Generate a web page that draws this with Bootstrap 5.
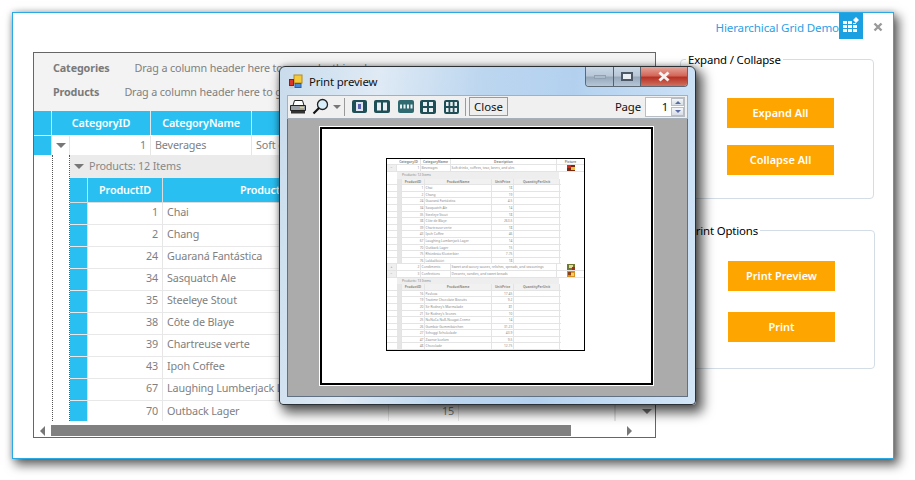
<!DOCTYPE html>
<html lang="en">
<head>
<meta charset="utf-8">
<title>Hierarchical Grid Demo</title>
<link href="https://cdn.jsdelivr.net/npm/bootstrap@5.3.0/dist/css/bootstrap.min.css" rel="stylesheet">
<script src="https://cdn.jsdelivr.net/npm/bootstrap@5.3.0/dist/js/bootstrap.bundle.min.js"></script>
<style>
html,body{margin:0;background:#fff;overflow:hidden}
body{font-family:"Noto Sans","Open Sans",sans-serif;font-size:10.8px;letter-spacing:-.15px;line-height:1.2;color:#7f7f7f}
.desk{position:relative;width:915px;height:480px;overflow:hidden;background:#fff}
.appwin{position:absolute;left:12px;top:12px;width:882px;height:447px;background:#fff;border:1px solid #29a9e6;box-shadow:4px 5px 10px 1px rgba(0,0,0,.6),0 0 6px rgba(0,0,0,.2)}
.apphead{height:26px;justify-content:flex-end}
.apptitle{color:#2d9fe6;font-size:11.6px;margin-top:8px}
.applogo{width:24px;height:26px;background:#1ba1e2}
.appx{width:30px;padding-top:7px;text-align:center;color:#9a9a9a}
.appbody{margin-top:13px;padding-left:20px;gap:24px}
.gridbox{width:623px;height:386px;border:1px solid #666;background:#fff;overflow:hidden}
.grouparea{height:58px;background:#f3f3f3;padding:3px 0 0 19px;white-space:nowrap;overflow:hidden}
.grouparea .gline{height:24px;align-items:center}
.gname{font-weight:700;color:#7a7a7a}
.gn1{margin-right:25px}
.gn2{margin-right:25px}
.hrow{height:25px;background:#29bff1;color:#fff;font-weight:600;border-bottom:1px solid #fff}
.hcell{display:flex;align-items:center;justify-content:center;border-right:1px solid #dfe9ee;flex:none;white-space:nowrap;overflow:hidden}
.drow{height:19px;background:#fff}
.bcell{display:flex;align-items:center;padding:0 4px;border-right:1px solid #e6e6e6;flex:none;white-space:nowrap;overflow:hidden}
.tr{justify-content:flex-end}
.w18{width:18px}.w81{width:81px}.w99{width:99px}.w101{width:101px}.w75{width:75px}.w226{width:226px}.w70{width:70px}.w156{width:156px}.w363{width:363px}
.bluecell{background:#29bff1;border-right:1px solid #ddd;flex:none}
.exp{padding:0;justify-content:center}
.tdown{width:0;height:0;border-left:5px solid transparent;border-right:5px solid transparent;border-top:5px solid #777;flex:none}
.dotcol{width:18px;flex:none;border-left:1px dotted #555;border-right:1px dotted #555;height:266px}
.dtlbody{height:266px;overflow:hidden}
.gbar{height:23px;background:#ebebeb;align-items:center;padding-left:4px;gap:5px;color:#888}
.prow{height:22px;border-bottom:1px solid #e8e8e8;background:#fff}
.prow .bcell{padding-bottom:2px}
.prow:last-child{border-bottom:0}
.phead{height:25px;background:#29bff1;color:#fff;font-weight:600;border-bottom:1px solid #ddd}
.phead .hcell{border-right-color:#ddd}
.vbar{width:40px;flex:none;display:flex;justify-content:center;align-items:flex-end;padding:0 0 7px 22px;border-left:1px solid #e6e6e6}
.sbar{height:15px;margin-top:2px;align-items:center;padding-left:6px}
.tleft{width:0;height:0;border-top:5px solid transparent;border-bottom:5px solid transparent;border-right:5px solid #777}
.tright{width:0;height:0;border-top:5px solid transparent;border-bottom:5px solid transparent;border-left:5px solid #777;margin-left:56px}
.sthumb{width:520px;height:11px;background:#808080;margin-left:6px}
.sidepanel{width:196px}
.fbox{border:1px solid #d3dde6;border-radius:4px;padding:0;width:194px;margin:0}
.fbox legend{float:none;width:auto;font-size:11.4px;line-height:15px;margin:0 0 0 5px;padding:0 2px;color:#000}
.fb1{height:147px}
.fb2{height:146px;margin:24px 0 0 1px}
.orbtn{display:block;width:107px;height:30px;background:orange;color:#fff;font-size:11px;font-weight:600;border:0;border-radius:0;padding:0;margin:0 0 0 46px;letter-spacing:0}
.orbtn:hover{background:orange;color:#fff}
.orb1{margin-top:31px}.orb2{margin-top:17px}.orb3{margin-top:23px}.orb4{margin-top:21px}
.dlg{position:absolute;left:279px;top:66px;width:417px;height:339px;border:1px solid #2c3136;border-radius:6px 6px 4px 4px;background:linear-gradient(97deg,#c9dcec 0,#dfeaf5 22%,#bcd6ef 45%,#b3d1ef 65%,#d3e6f8 100%);box-shadow:5px 6px 12px 2px rgba(0,0,0,.65),0 0 5px rgba(0,0,0,.3);padding:0 7px 7px;overflow:hidden}
.dtitle{height:28px;align-items:flex-start}
.dttext{margin:8px 0 0 6px;color:#111;font-size:11.4px}
.dicon{margin:7px 0 0 2px}
.wbtns{height:20px;margin-left:auto;border:1px solid #5c6874;border-top:0;border-radius:0 0 4px 4px;overflow:hidden}
.wb{height:19px;display:flex;align-items:center;justify-content:center;border-right:1px solid #56616d;background:linear-gradient(#c9d7e6,#b9c8d8 45%,#97a9bb 55%,#b5c6d8)}
.wmin{width:28px}.wmax{width:27px}
.wcl{width:46px;border:0;background:linear-gradient(#e5a59a,#d3685a 45%,#b73326 55%,#d0705f)}
.wminbar{width:12px;height:4px;background:#a9bbcc;border:1px solid #8fa0b2}
.wmaxbox{width:12px;height:9px;border:2px solid #4c5866;background:#e8eef4}
.dtool{height:24px;background:#f0f0f0;border:1px solid #a6b0ba;align-items:center;padding:0 2px 0 1px}
.tb{flex:none;display:block}
.tzoom{margin-left:5px}
.tbarrow{margin-left:4px;border-left-width:4px;border-right-width:4px;border-top-width:4px}
.tsep{width:1px;height:18px;background:#9a9a9a;flex:none}
.sep1{margin-left:3px}.ic1{margin-left:7px}.ic2{margin-left:7px}.ic3{margin-left:8px}.ic4{margin-left:6px}.ic5{margin-left:8px}.sep2{margin-left:6px}
.closebtn{height:19px;width:39px;flex:none;margin-left:3px;border:1px solid #9a9a9a;background:#eee;color:#111;font-size:11.4px;padding:0;border-radius:0;line-height:15px}
.pglabel{margin-left:auto;color:#111;font-size:11.4px}
.spin{width:40px;height:20px;background:#fff;border:1px solid #b9bec4;margin-left:4px;color:#111;font-size:11.4px;align-items:center;justify-content:flex-end}
.spin .val{padding-right:3px}
.spinbtn{width:13px;height:18px;flex:none;gap:1px}
.spinbtn>div{flex:1;background:linear-gradient(#f4f6f8,#d8dee6);border:1px solid #b8bec6;display:flex;align-items:center;justify-content:center}
.tu{width:0;height:0;border-left:3px solid transparent;border-right:3px solid transparent;border-bottom:3px solid #5b6ba8}
.td{width:0;height:0;border-left:3px solid transparent;border-right:3px solid transparent;border-top:3px solid #5b6ba8}
.darea{height:279px;background:#ababab;border:1px solid #5f7183;border-top:0;padding:8px 0 0 32px}
.pgframe{width:333px;height:258px;background:#fff;border:2px solid #000;box-shadow:0 0 0 1px #fff;padding:29px 0 0 64px}
.minipage{width:199px;height:193px;border:1px solid #000;overflow:hidden;background:#fff;font-size:3.3px;letter-spacing:0;line-height:6px;color:#8a8a8a}
.mr{display:flex;height:6.6px;flex:none;border-bottom:.6px solid #e4e4e4}
.mr>span{flex:none;overflow:hidden;white-space:nowrap;padding:0 .6px;border-right:.6px solid #e4e4e4}
.mr:has(.b1){width:174px}
.mt{text-align:right}
.mc{text-align:center}
.mtop{font-weight:700}
.mhead{background:#f1f1f1;font-weight:700}
.mi{width:10px;background:#efefef;color:#777}
.mr>.mi:empty{background:#fff;border-right:0}
.mi2{width:5px;background:#e6e6e6}
.mr>.mg{background:#eee;padding-left:5px;width:162px;border:0}
.a1{width:24px}.a2{width:30px}.a3{width:106px}.a5{width:28px}
.b1{width:23px}.b2{width:67px}.b3{width:22px}.b4{width:46px}
.pic{margin-left:10px;display:block;flex:none}
</style>
</head>
<body>
<div class="desk">
  <div class="appwin d-flex flex-column">
    <div class="apphead d-flex">
      <div class="apptitle">Hierarchical Grid Demo</div>
      <div class="applogo d-flex align-items-center justify-content-center">
        <svg width="20" height="20" viewBox="0 0 20 20"><path fill="#fff" d="M2 5h4v3H2zM7 5h4v3H7zM12 7h3v1h-3zM2 9h4v3H2zM7 9h4v3H7zM12 9h4v3h-4zM2 13h4v3H2zM7 13h4v3H7zM12 13h4v3h-4zM15 1l3 3-3 3-3-3z"/></svg>
      </div>
      <div class="appx"><svg width="10" height="10" viewBox="0 0 10 10"><path d="M1.5 1.5l7 7M8.5 1.5l-7 7" stroke="#9a9a9a" stroke-width="2.4"/></svg></div>
    </div>
    <div class="appbody d-flex">
      <div class="gridbox flex-none">
        <div class="grouparea">
          <div class="gline d-flex"><span class="gname gn1">Categories</span><span>Drag a column header here to group by this column</span></div>
          <div class="gline d-flex"><span class="gname gn2">Products</span><span>Drag a column header here to group by this column</span></div>
        </div>
        <div class="hrow d-flex">
          <div class="hcell w18"></div><div class="hcell w99">CategoryID</div><div class="hcell w101">CategoryName</div><div class="hcell w363">Description</div><div class="hcell flex-grow-1">Picture</div>
        </div>
        <div class="d-flex">
          <div class="flex-grow-0">
            <div class="drow d-flex">
              <div class="bluecell w18"></div><div class="bcell w18 exp"><span class="tdown"></span></div><div class="bcell w81 tr">1</div><div class="bcell w101">Beverages</div><div class="bcell w363">Soft drinks, coffees, teas, beers, and ales</div>
            </div>
            <div class="d-flex">
              <div class="w18 flex-none"></div>
              <div class="dotcol"></div>
              <div class="dtlbody flex-grow-1">
                <div class="gbar d-flex"><span class="tdown"></span><span>Products: 12 Items</span></div>
                <div class="phead d-flex"><div class="hcell w18"></div><div class="hcell w75">ProductID</div><div class="hcell w226">ProductName</div><div class="hcell w70">UnitPrice</div><div class="hcell w156">QuantityPerUnit</div></div>
                <div class="prow d-flex"><div class="bluecell w18"></div><div class="bcell w75 tr">1</div><div class="bcell w226">Chai</div><div class="bcell w70 tr">18</div><div class="bcell w156"></div></div>
                <div class="prow d-flex"><div class="bluecell w18"></div><div class="bcell w75 tr">2</div><div class="bcell w226">Chang</div><div class="bcell w70 tr">19</div><div class="bcell w156"></div></div>
                <div class="prow d-flex"><div class="bluecell w18"></div><div class="bcell w75 tr">24</div><div class="bcell w226">Guaraná Fantástica</div><div class="bcell w70 tr">4.5</div><div class="bcell w156"></div></div>
                <div class="prow d-flex"><div class="bluecell w18"></div><div class="bcell w75 tr">34</div><div class="bcell w226">Sasquatch Ale</div><div class="bcell w70 tr">14</div><div class="bcell w156"></div></div>
                <div class="prow d-flex"><div class="bluecell w18"></div><div class="bcell w75 tr">35</div><div class="bcell w226">Steeleye Stout</div><div class="bcell w70 tr">18</div><div class="bcell w156"></div></div>
                <div class="prow d-flex"><div class="bluecell w18"></div><div class="bcell w75 tr">38</div><div class="bcell w226">Côte de Blaye</div><div class="bcell w70 tr">263.5</div><div class="bcell w156"></div></div>
                <div class="prow d-flex"><div class="bluecell w18"></div><div class="bcell w75 tr">39</div><div class="bcell w226">Chartreuse verte</div><div class="bcell w70 tr">18</div><div class="bcell w156"></div></div>
                <div class="prow d-flex"><div class="bluecell w18"></div><div class="bcell w75 tr">43</div><div class="bcell w226">Ipoh Coffee</div><div class="bcell w70 tr">46</div><div class="bcell w156"></div></div>
                <div class="prow d-flex"><div class="bluecell w18"></div><div class="bcell w75 tr">67</div><div class="bcell w226">Laughing Lumberjack Lager</div><div class="bcell w70 tr">14</div><div class="bcell w156"></div></div>
                <div class="prow d-flex"><div class="bluecell w18"></div><div class="bcell w75 tr">70</div><div class="bcell w226">Outback Lager</div><div class="bcell w70 tr">15</div><div class="bcell w156"></div></div>
              </div>
            </div>
          </div>
          <div class="vbar"><span class="tdown"></span></div>
        </div>
        <div class="sbar d-flex"><span class="tleft"></span><span class="sthumb"></span><span class="tright"></span></div>
      </div>
      <div class="sidepanel d-flex flex-column">
        <fieldset class="fbox fb1">
          <legend>Expand / Collapse</legend>
          <button class="btn orbtn orb1">Expand All</button>
          <button class="btn orbtn orb2">Collapse All</button>
        </fieldset>
        <fieldset class="fbox fb2">
          <legend>Print Options</legend>
          <button class="btn orbtn orb3">Print Preview</button>
          <button class="btn orbtn orb4">Print</button>
        </fieldset>
      </div>
    </div>
  </div>

  <div class="dlg d-flex flex-column">
    <div class="dtitle d-flex">
      <svg class="dicon" width="14" height="15" viewBox="0 0 14 15"><rect x="5" y="1" width="8" height="8" fill="#f4c93a" stroke="#b58a1c"/><rect x="0.5" y="5.5" width="4" height="6" fill="#d8352a" stroke="#8e1d15"/><rect x="6" y="9.5" width="6" height="4" fill="#4a87d6" stroke="#2c5ea6"/><rect x="0.5" y="12" width="4" height="2.5" fill="#c8ccd2"/></svg>
      <div class="dttext">Print preview</div>
      <div class="wbtns d-flex">
        <div class="wb wmin"><div class="wminbar"></div></div>
        <div class="wb wmax"><div class="wmaxbox"></div></div>
        <div class="wb wcl"><svg width="14" height="11" viewBox="0 0 14 11"><path d="M2.5 1.5l9 8M11.5 1.5l-9 8" stroke="#f4f4f4" stroke-width="3"/></svg></div>
      </div>
    </div>
    <div class="dtool d-flex">
      <svg class="tb" width="18" height="15" viewBox="0 0 18 15"><path d="M5.5 1.5h8l1.5 5H4z" fill="#fff" stroke="#222"/><path d="M1.5 6.5h15v5h-15z" fill="#9a9fa6" stroke="#222"/><path d="M2 12h14v2.5H2z" fill="#333"/><path d="M11 8.500h4" stroke="#e8d050" stroke-width="1.5"/></svg>
      <svg class="tb tzoom" width="17" height="17" viewBox="0 0 17 17"><circle cx="10.5" cy="6.5" r="5" fill="#d8eefb" stroke="#222" stroke-width="1.3"/><path d="M7 10L1.5 15.5" stroke="#111" stroke-width="2.2"/></svg>
      <span class="tdown tb tbarrow"></span>
      <span class="tsep sep1"></span>
      <svg class="tb ic1" width="15" height="13" viewBox="0 0 15 13"><rect width="15" height="13" rx="2" fill="#1e4f57"/><rect x="4" y="2" width="7" height="9" fill="#dfe6ee"/><path d="M6 4h3v5H6z" fill="#5a63b0"/></svg>
      <svg class="tb ic2" width="16" height="13" viewBox="0 0 16 13"><rect width="16" height="13" rx="2" fill="#1e4f57"/><rect x="3" y="2.5" width="4" height="8" fill="#e8eef2"/><rect x="9" y="2.5" width="4" height="8" fill="#e8eef2"/></svg>
      <svg class="tb ic3" width="16" height="13" viewBox="0 0 16 13"><rect width="16" height="13" rx="2" fill="#2f6a70"/><path d="M2 4.5h2v4H2zM5.5 4.500h2v4h-2zM9 4.500h2v4H9zM12.500 4.500h2v4h-2z" fill="#e8eef2"/></svg>
      <svg class="tb ic4" width="16" height="14" viewBox="0 0 16 14"><rect width="16" height="14" rx="2" fill="#1e4f57"/><path d="M3 2h4v4H3zM9 2h4v4H9zM3 8h4v4H3zM9 8h4v4H9z" fill="#e8eef2"/></svg>
      <svg class="tb ic5" width="15" height="14" viewBox="0 0 15 14"><rect width="15" height="14" rx="2" fill="#1e4f57"/><path d="M2 2h2.500v4H2zM6.250 2h2.500v4h-2.500zM10.500 2H13v4h-2.500zM2 8h2.500v4H2zM6.250 8h2.500v4h-2.500zM10.500 8H13v4h-2.500z" fill="#e8eef2"/></svg>
      <span class="tsep sep2"></span>
      <button class="btn closebtn">Close</button>
      <span class="pglabel">Page</span>
      <div class="spin d-flex"><span class="val">1</span><div class="spinbtn d-flex flex-column"><div><span class="tu"></span></div><div><span class="td"></span></div></div></div>
    </div>
    <div class="darea">
      <div class="pgframe">
        <div class="minipage d-flex flex-column">
          <div class="mr mtop"><span class="mi"></span><span class="a1 mc">CategoryID</span><span class="a2 mc">CategoryName</span><span class="a3 mc">Description</span><span class="a5 mc">Picture</span></div>
          <div class="mr"><span class="mi mc">−</span><span class="a1 mt">1</span><span class="a2">Beverages</span><span class="a3">Soft drinks, coffees, teas, beers, and ales</span>
            <svg class="pic" width="8" height="6" viewBox="0 0 8 6"><rect width="8" height="6" fill="#7a2a10"/><rect width="4" height="3" fill="#d8281c"/><rect x="4" y="2" width="4" height="3" fill="#e8c040"/></svg></div>
          <div class="mr border-0"><span class="mi"></span><span class="mg">Products: 12 Items</span></div>
          <div class="mr"><span class="mi"></span><span class="mhead mi2"></span><span class="b1 mhead mc">ProductID</span><span class="b2 mhead mc">ProductName</span><span class="b3 mhead mc">UnitPrice</span><span class="b4 mhead mc">QuantityPerUnit</span></div>
          <div class="mr"><span class="mi"></span><span class="mi2"></span><span class="b1 mt">1</span><span class="b2">Chai</span><span class="b3 mt">18</span><span class="b4"></span></div>
          <div class="mr"><span class="mi"></span><span class="mi2"></span><span class="b1 mt">2</span><span class="b2">Chang</span><span class="b3 mt">19</span><span class="b4"></span></div>
          <div class="mr"><span class="mi"></span><span class="mi2"></span><span class="b1 mt">24</span><span class="b2">Guaraná Fantástica</span><span class="b3 mt">4.5</span><span class="b4"></span></div>
          <div class="mr"><span class="mi"></span><span class="mi2"></span><span class="b1 mt">34</span><span class="b2">Sasquatch Ale</span><span class="b3 mt">14</span><span class="b4"></span></div>
          <div class="mr"><span class="mi"></span><span class="mi2"></span><span class="b1 mt">35</span><span class="b2">Steeleye Stout</span><span class="b3 mt">18</span><span class="b4"></span></div>
          <div class="mr"><span class="mi"></span><span class="mi2"></span><span class="b1 mt">38</span><span class="b2">Côte de Blaye</span><span class="b3 mt">263.5</span><span class="b4"></span></div>
          <div class="mr"><span class="mi"></span><span class="mi2"></span><span class="b1 mt">39</span><span class="b2">Chartreuse verte</span><span class="b3 mt">18</span><span class="b4"></span></div>
          <div class="mr"><span class="mi"></span><span class="mi2"></span><span class="b1 mt">43</span><span class="b2">Ipoh Coffee</span><span class="b3 mt">46</span><span class="b4"></span></div>
          <div class="mr"><span class="mi"></span><span class="mi2"></span><span class="b1 mt">67</span><span class="b2">Laughing Lumberjack Lager</span><span class="b3 mt">14</span><span class="b4"></span></div>
          <div class="mr"><span class="mi"></span><span class="mi2"></span><span class="b1 mt">70</span><span class="b2">Outback Lager</span><span class="b3 mt">15</span><span class="b4"></span></div>
          <div class="mr"><span class="mi"></span><span class="mi2"></span><span class="b1 mt">75</span><span class="b2">Rhönbräu Klosterbier</span><span class="b3 mt">7.75</span><span class="b4"></span></div>
          <div class="mr"><span class="mi"></span><span class="mi2"></span><span class="b1 mt">76</span><span class="b2">Lakkalikööri</span><span class="b3 mt">18</span><span class="b4"></span></div>
          <div class="mr"><span class="mi mc">+</span><span class="a1 mt">2</span><span class="a2">Condiments</span><span class="a3">Sweet and savory sauces, relishes, spreads, and seasonings</span>
            <svg class="pic" width="8" height="6" viewBox="0 0 8 6"><rect width="8" height="6" fill="#6e7a30"/><rect x="2" y="1" width="4" height="3" fill="#e8d8a0"/><rect x="5" y="3" width="3" height="3" fill="#a03018"/></svg></div>
          <div class="mr"><span class="mi mc">−</span><span class="a1 mt">3</span><span class="a2">Confections</span><span class="a3">Desserts, candies, and sweet breads</span>
            <svg class="pic" width="8" height="6" viewBox="0 0 8 6"><rect width="8" height="6" fill="#d89020"/><rect x="1" y="1" width="3" height="3" fill="#8a4010"/><rect x="4" y="2" width="3" height="3" fill="#f0d060"/></svg></div>
          <div class="mr border-0"><span class="mi"></span><span class="mg">Products: 13 Items</span></div>
          <div class="mr"><span class="mi"></span><span class="mhead mi2"></span><span class="b1 mhead mc">ProductID</span><span class="b2 mhead mc">ProductName</span><span class="b3 mhead mc">UnitPrice</span><span class="b4 mhead mc">QuantityPerUnit</span></div>
          <div class="mr"><span class="mi"></span><span class="mi2"></span><span class="b1 mt">16</span><span class="b2">Pavlova</span><span class="b3 mt">17.45</span><span class="b4"></span></div>
          <div class="mr"><span class="mi"></span><span class="mi2"></span><span class="b1 mt">19</span><span class="b2">Teatime Chocolate Biscuits</span><span class="b3 mt">9.2</span><span class="b4"></span></div>
          <div class="mr"><span class="mi"></span><span class="mi2"></span><span class="b1 mt">20</span><span class="b2">Sir Rodney's Marmalade</span><span class="b3 mt">81</span><span class="b4"></span></div>
          <div class="mr"><span class="mi"></span><span class="mi2"></span><span class="b1 mt">21</span><span class="b2">Sir Rodney's Scones</span><span class="b3 mt">10</span><span class="b4"></span></div>
          <div class="mr"><span class="mi"></span><span class="mi2"></span><span class="b1 mt">25</span><span class="b2">NuNuCa Nuß-Nougat-Creme</span><span class="b3 mt">14</span><span class="b4"></span></div>
          <div class="mr"><span class="mi"></span><span class="mi2"></span><span class="b1 mt">26</span><span class="b2">Gumbär Gummibärchen</span><span class="b3 mt">31.23</span><span class="b4"></span></div>
          <div class="mr"><span class="mi"></span><span class="mi2"></span><span class="b1 mt">27</span><span class="b2">Schoggi Schokolade</span><span class="b3 mt">43.9</span><span class="b4"></span></div>
          <div class="mr"><span class="mi"></span><span class="mi2"></span><span class="b1 mt">47</span><span class="b2">Zaanse koeken</span><span class="b3 mt">9.5</span><span class="b4"></span></div>
          <div class="mr"><span class="mi"></span><span class="mi2"></span><span class="b1 mt">48</span><span class="b2">Chocolade</span><span class="b3 mt">12.75</span><span class="b4"></span></div>
        </div>
      </div>
    </div>
  </div>
</div>
</body>
</html>
